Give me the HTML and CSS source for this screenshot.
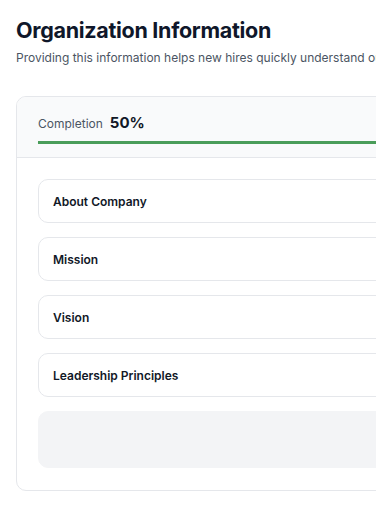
FILE: index.html
```html
<!DOCTYPE html>
<html lang="en">
<head>
    <meta charset="UTF-8">
    <meta name="viewport" content="width=device-width, initial-scale=1.0">
    <title>Organization Information</title>
    <link rel="stylesheet" href="styles.css">
</head>
<body>
    <div class="page">
        <h1 class="title">Organization Information</h1>
        <p class="subtitle">Providing this information helps new hires quickly understand our company, its mission and the way we work.</p>

        <div class="card">
            <!-- прогресс -->
            <div class="card-header">
                <div class="completion">
                    <span class="completion-label">Completion</span>
                    <span class="completion-value">50%</span>
                </div>
                <div class="progress">
                    <div class="progress-fill" style="width: 50%;"></div>
                </div>
            </div>

            <!-- секции -->
            <div class="card-body">
                <div class="section">About Company</div>
                <div class="section">Mission</div>
                <div class="section">Vision</div>
                <div class="section">Leadership Principles</div>
                <div class="section section-empty"></div>
            </div>
        </div>
    </div>
</body>
</html>
```

FILE: styles.css
```css
body {
    margin: 0;
    padding: 0;
    font-family: Inter, "Noto Sans", sans-serif;
    color: #111827;
    background: #fff;
    overflow: hidden;
}
.page {
    width: 720px;
    padding: 16px 16px;
}
.title {
    margin: 0;
    font-size: 21.5px;
    line-height: 28px;
    font-weight: 700;
    color: #0f172a;
    letter-spacing: -0.3px;
}
.subtitle {
    margin: 5px 0 0;
    font-size: 12px;
    line-height: 18px;
    color: #4b5563;
    white-space: nowrap;
}

.card {
    margin-top: 29px;
    border: 1px solid #e5e7eb;
    border-radius: 10px;
    overflow: hidden;
}
.card-header {
    background: #f9fafb;
    padding: 16px 21px 13px;
    border-bottom: 1px solid #e5e7eb;
}
.completion {
    display: flex;
    align-items: baseline;
    gap: 7px;
}
.completion-label {
    font-size: 12px;
    color: #4b5563;
}
.completion-value {
    font-size: 15px;
    font-weight: 700;
    color: #111827;
}
.progress {
    margin-top: 9px;
    height: 3px;
    background: #4a9d5a;
    border-radius: 2px;
}
.progress-fill {
    height: 100%;
    background: #4a9d5a;
}

.card-body {
    padding: 21px 21px 22px;
    display: flex;
    flex-direction: column;
    gap: 14px;
}
.section {
    box-sizing: border-box;
    height: 44px;
    padding: 0 14px;
    display: flex;
    align-items: center;
    border: 1px solid #e5e7eb;
    border-radius: 10px;
    font-size: 12px;
    font-weight: 600;
    color: #111827;
}
.section-empty {
    height: 57px;
    background: #f3f4f6;
    border-color: #f3f4f6;
}
```
